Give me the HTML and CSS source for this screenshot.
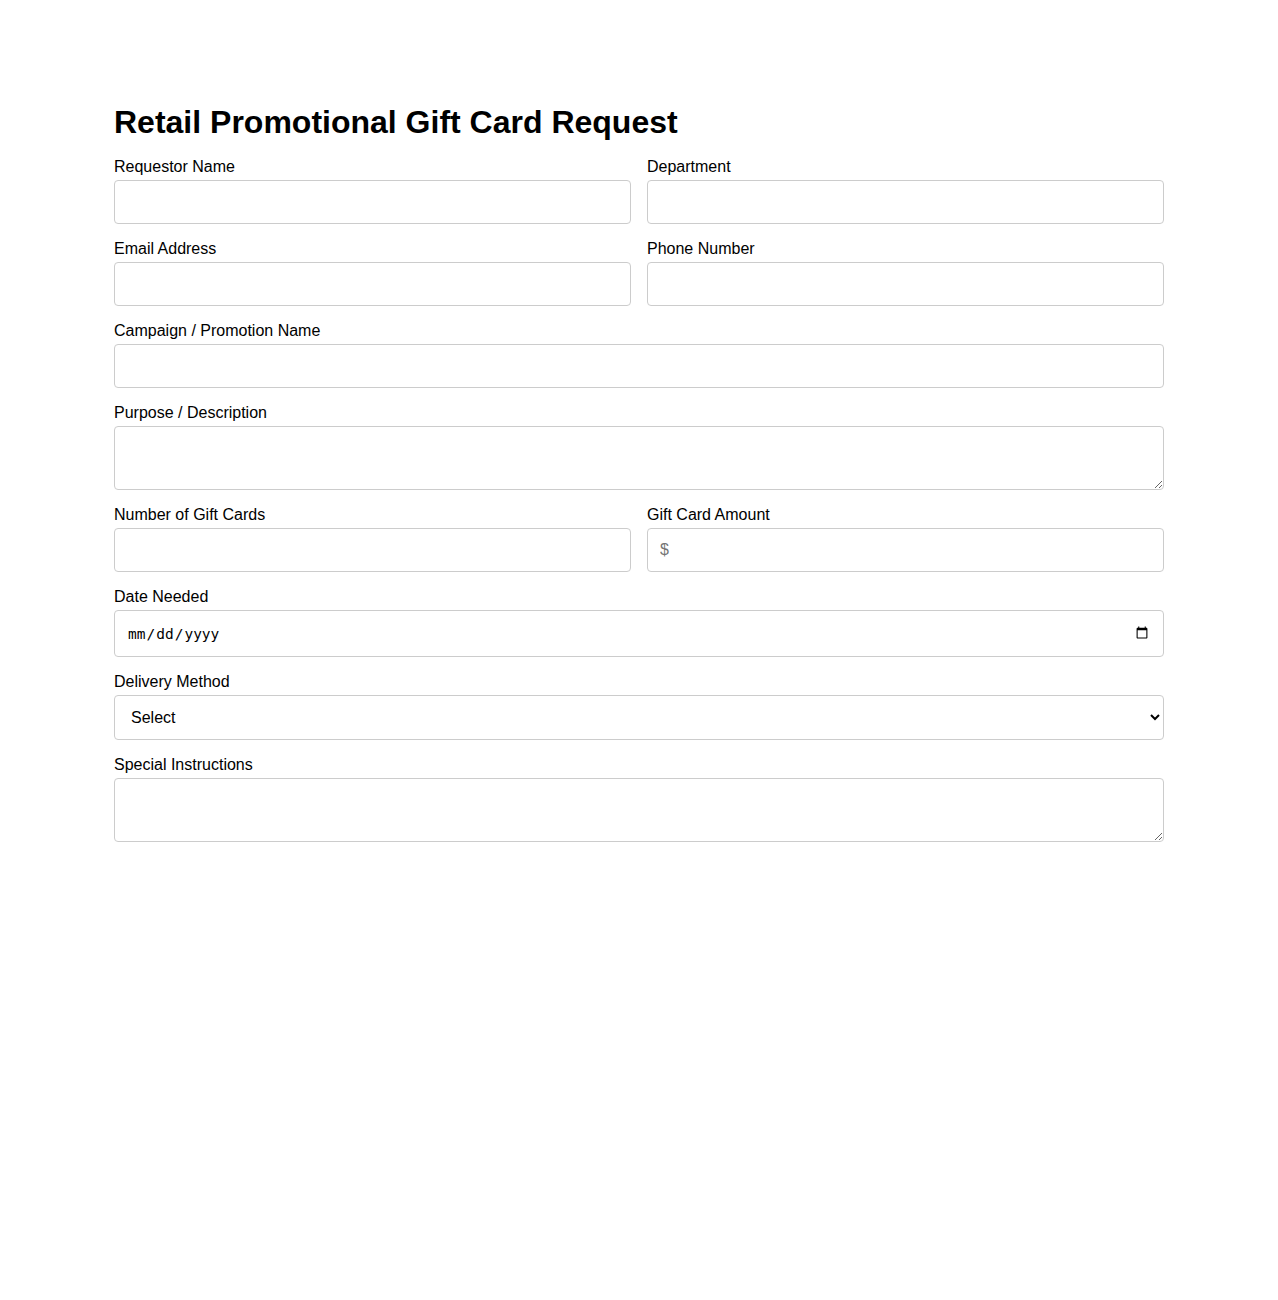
FILE: index.html
```html
<!DOCTYPE html>
<html lang="en">
<head>
<meta charset="utf-8">
<title>Retail Promotional Gift Card Request</title>
<link rel="stylesheet" href="styles.css">
</head>
<body>
<div class="container">
  <h1 class="title">Retail Promotional Gift Card Request</h1>
  <form class="form">
    <div class="row">
      <div class="field"><label class="label">Requestor Name</label><input class="control" type="text"></div>
      <div class="field"><label class="label">Department</label><input class="control" type="text"></div>
    </div>
    <div class="row">
      <div class="field"><label class="label">Email Address</label><input class="control" type="email"></div>
      <div class="field"><label class="label">Phone Number</label><input class="control" type="tel"></div>
    </div>
    <div class="field"><label class="label">Campaign / Promotion Name</label><input class="control" type="text"></div>
    <div class="field"><label class="label">Purpose / Description</label><textarea class="control area"></textarea></div>
    <div class="row">
      <div class="field"><label class="label">Number of Gift Cards</label><input class="control" type="number"></div>
      <div class="field"><label class="label">Gift Card Amount</label><input class="control" type="text" placeholder="$"></div>
    </div>
    <div class="field"><label class="label">Date Needed</label><input class="control date" type="date"></div>
    <div class="field"><label class="label">Delivery Method</label>
      <select class="control select">
        <option>Select</option>
        <option>Email</option>
        <option>Mail</option>
      </select>
    </div>
    <div class="field"><label class="label">Special Instructions</label><textarea class="control area"></textarea></div>
  </form>
</div>
</body>
</html>
```
FILE: styles.css
```css
body {
  margin: 0;
  background: #fff;
  color: #000;
  font-family: "Liberation Sans", Arial, sans-serif;
}
.container {
  max-width: 1050px;
  margin: 0 auto;
  padding-top: 104px;
}
.title {
  font-size: 32px;
  font-weight: bold;
  margin: 0 0 17px;
  line-height: 37px;
}
.form {
  display: flex;
  flex-direction: column;
  gap: 16px;
}
.row {
  display: grid;
  grid-template-columns: 1fr 1fr;
  gap: 16px;
}
.field {
  display: flex;
  flex-direction: column;
}
.label {
  font-size: 16px;
  line-height: 18px;
  margin-bottom: 4px;
}
.control {
  box-sizing: border-box;
  width: 100%;
  height: 44px;
  padding: 12px;
  border: 1px solid #ccc;
  border-radius: 4px;
  font-family: "Liberation Sans", Arial, sans-serif;
  font-size: 16px;
  background: #fff;
  color: #000;
  margin: 0;
}
.control::placeholder {
  color: #757575;
}
.area {
  height: 64px;
  resize: vertical;
}
.date {
  height: 47px;
  font-family: "DejaVu Sans Mono", monospace;
  font-size: 14.5px;
}
.select {
  height: 45px;
  padding: 12px;
}
```
